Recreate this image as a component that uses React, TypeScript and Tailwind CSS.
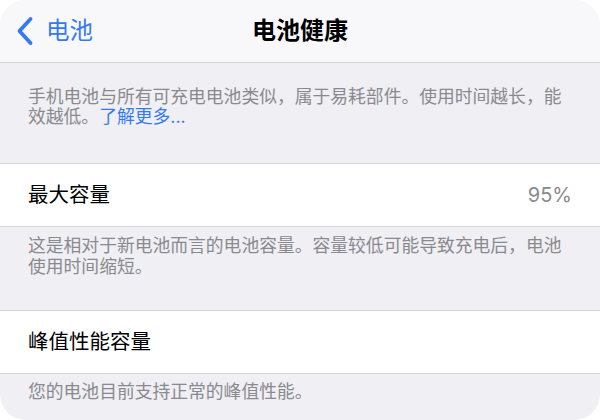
import React from "react";

const App = () => {
  return (
    <div className="w-[600px] h-[420px] bg-white">
      <div
        className="w-[600px] h-[420px] overflow-hidden rounded-[26px] bg-[#efeff4] text-[#8a8a8e]"
        style={{ fontFamily: "Inter, 'Noto Sans CJK SC', sans-serif" }}
      >
        {/* Nav bar */}
        <div className="relative h-[63px] bg-[#f8f8fa] border-b border-[#d6d6da] flex items-center">
          <div className="flex items-center pl-[16px] text-[#3478f6]">
            <svg width="18" height="30" viewBox="0 0 18 30" fill="none">
              <path
                d="M14.5 3 L3.5 15 L14.5 27"
                stroke="#3478f6"
                strokeWidth="3.8"
                strokeLinecap="round"
                strokeLinejoin="round"
              />
            </svg>
            <span className="ml-[12px] text-[23.5px] leading-none">电池</span>
          </div>
          <div className="absolute inset-0 flex items-center justify-center">
            <span className="text-[24px] font-bold text-black leading-none">电池健康</span>
          </div>
        </div>

        {/* Intro text */}
        <div className="h-[100px] px-[28px] pt-[24px]">
          <p className="text-[17.8px] leading-[20px]">
            手机电池与所有可充电电池类似，属于易耗部件。使用时间越长，能效越低。
            <span className="inline-block text-[#3478f6]">了解更多...</span>
          </p>
        </div>

        {/* Max capacity */}
        <div className="h-[64px] bg-white border-y border-[#d6d6da] flex items-center justify-between px-[28px]">
          <span className="text-[20.5px] text-black">最大容量</span>
          <span className="text-[20px] text-[#8a8a8e]">95%</span>
        </div>
        <div className="h-[83px] px-[28px] pt-[8px]">
          <p className="text-[17.8px] leading-[21px]">
            这是相对于新电池而言的电池容量。容量较低可能导致充电后，电池使用时间缩短。
          </p>
        </div>

        {/* Peak performance */}
        <div className="h-[64px] bg-white border-y border-[#d6d6da] flex items-center px-[28px]">
          <span className="text-[20.5px] text-black">峰值性能容量</span>
        </div>
        <div className="px-[28px] pt-[7px]">
          <p className="text-[17.8px] leading-[21px]">您的电池目前支持正常的峰值性能。</p>
        </div>
      </div>
    </div>
  );
};

export default App;
